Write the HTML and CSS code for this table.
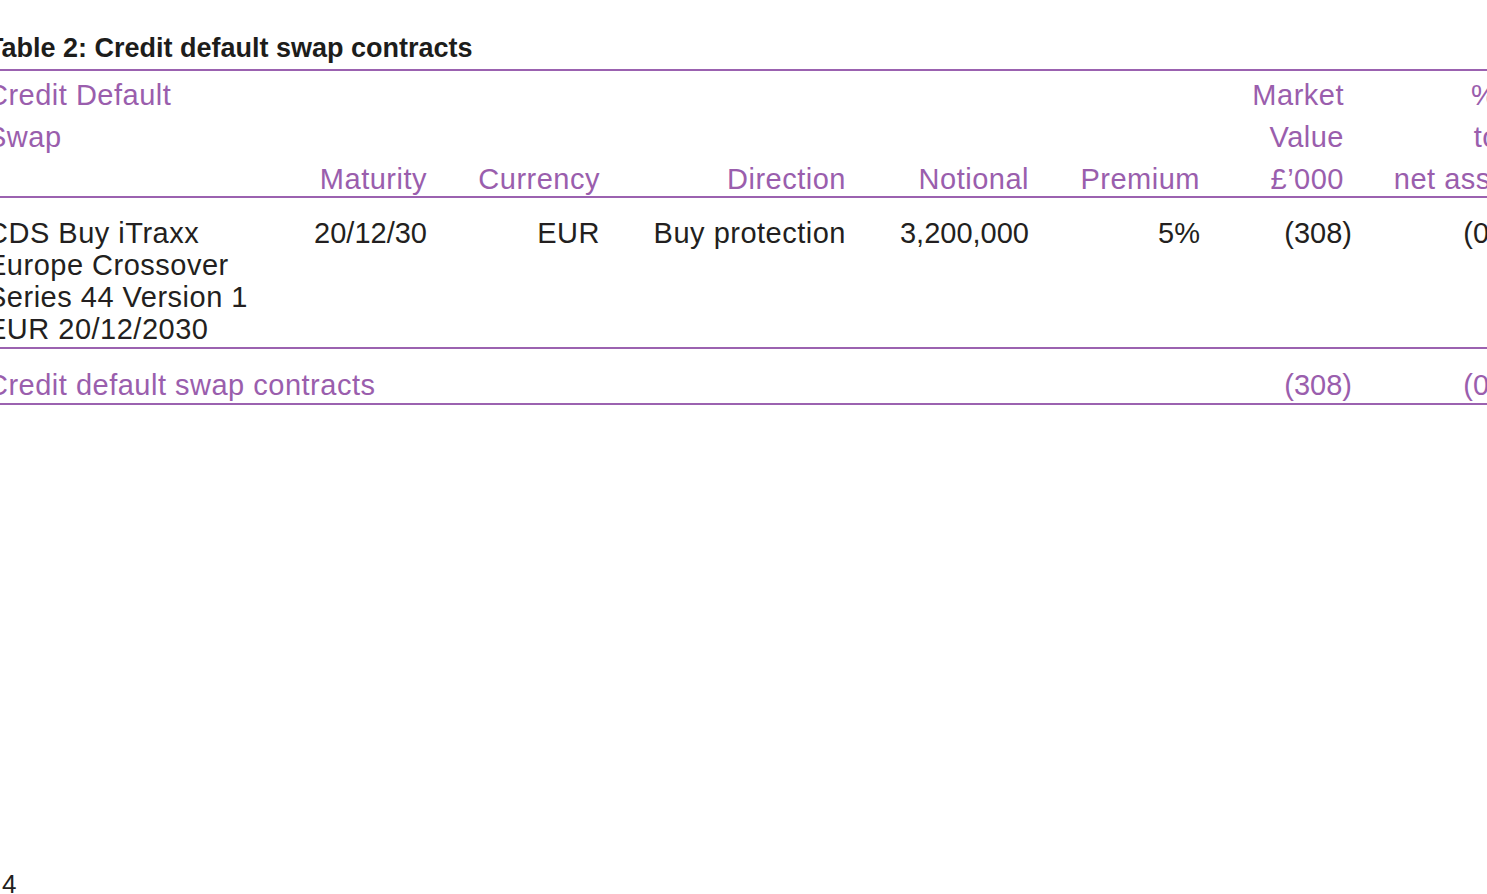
FILE: index.html
```html
<!DOCTYPE html>
<html lang="en">
<head>
<meta charset="utf-8">
<title>Table 2: Credit default swap contracts</title>
<link rel="stylesheet" href="styles.css">
</head>
<body>
<div class="page">
  <h2 class="title">Table 2: Credit default swap contracts</h2>
  <div class="table">
    <div class="row head">
      <div class="cell first">Credit Default<br>Swap</div>
      <div class="cell">Maturity</div>
      <div class="cell">Currency</div>
      <div class="cell">Direction</div>
      <div class="cell">Notional</div>
      <div class="cell">Premium</div>
      <div class="cell">Market<br>Value<br>£’000</div>
      <div class="cell">% of<br>total<br>net assets</div>
    </div>
    <div class="row data">
      <div class="cell first">CDS Buy iTraxx<br>Europe Crossover<br>Series 44 Version 1<br>EUR 20/12/2030</div>
      <div class="cell num">20/12/30</div>
      <div class="cell">EUR</div>
      <div class="cell">Buy protection</div>
      <div class="cell num">3,200,000</div>
      <div class="cell num">5%</div>
      <div class="cell num">(308<span class="hang">)</span></div>
      <div class="cell num">(0.10<span class="hang">)</span></div>
    </div>
    <div class="row total">
      <div class="cell first span6">Credit default swap contracts</div>
      <div class="cell num">(308<span class="hang">)</span></div>
      <div class="cell num">(0.10<span class="hang">)</span></div>
    </div>
  </div>
  <div class="folio">4</div>
</div>
</body>
</html>
```
FILE: styles.css
```css
html, body {
  margin: 0;
  padding: 0;
  overflow: hidden;
  background: #ffffff;
}

body {
  width: 1487px;
  height: 894px;
  font-family: "Liberation Sans", Arial, sans-serif;
  color: #231f20;
}

.page {
  margin-left: -13px;
  width: 1560px;
  height: 894px;
  display: flex;
  flex-direction: column;
}

.title {
  margin: 32px 0 5px 0;
  font-size: 27px;
  line-height: 32px;
  font-weight: bold;
  color: #1d1d1b;
}

.table {
  border-top: 2px solid #9b62b0;
  width: 1560px;
}

.row {
  display: grid;
  grid-template-columns: 303px 137px 173px 246px 183px 171px 144px 187px;
  font-size: 29px;
  letter-spacing: 0.5px;
}

.cell {
  text-align: right;
  white-space: nowrap;
}

.cell.first {
  text-align: left;
}

.cell.num {
  letter-spacing: 0;
}

.span6 {
  grid-column: 1 / span 6;
}

.hang {
  margin-right: -8px;
}

.head {
  height: 125px;
  align-items: end;
  color: #9a5ead;
  border-bottom: 2px solid #9b62b0;
}

.head .cell {
  line-height: 42px;
  margin-bottom: -4px;
}

.head .cell.first {
  align-self: start;
  margin-top: 3px;
  margin-bottom: 0;
}

.data {
  padding: 19px 0 2px 0;
  line-height: 32px;
  border-bottom: 2px solid #9b62b0;
}

.total {
  padding: 20px 0 2px 0;
  line-height: 32px;
  color: #9a5ead;
  border-bottom: 2px solid #9b62b0;
}

.folio {
  margin-top: auto;
  margin-bottom: -3px;
  padding-left: 15px;
  font-size: 26px;
  line-height: 26px;
}
```
